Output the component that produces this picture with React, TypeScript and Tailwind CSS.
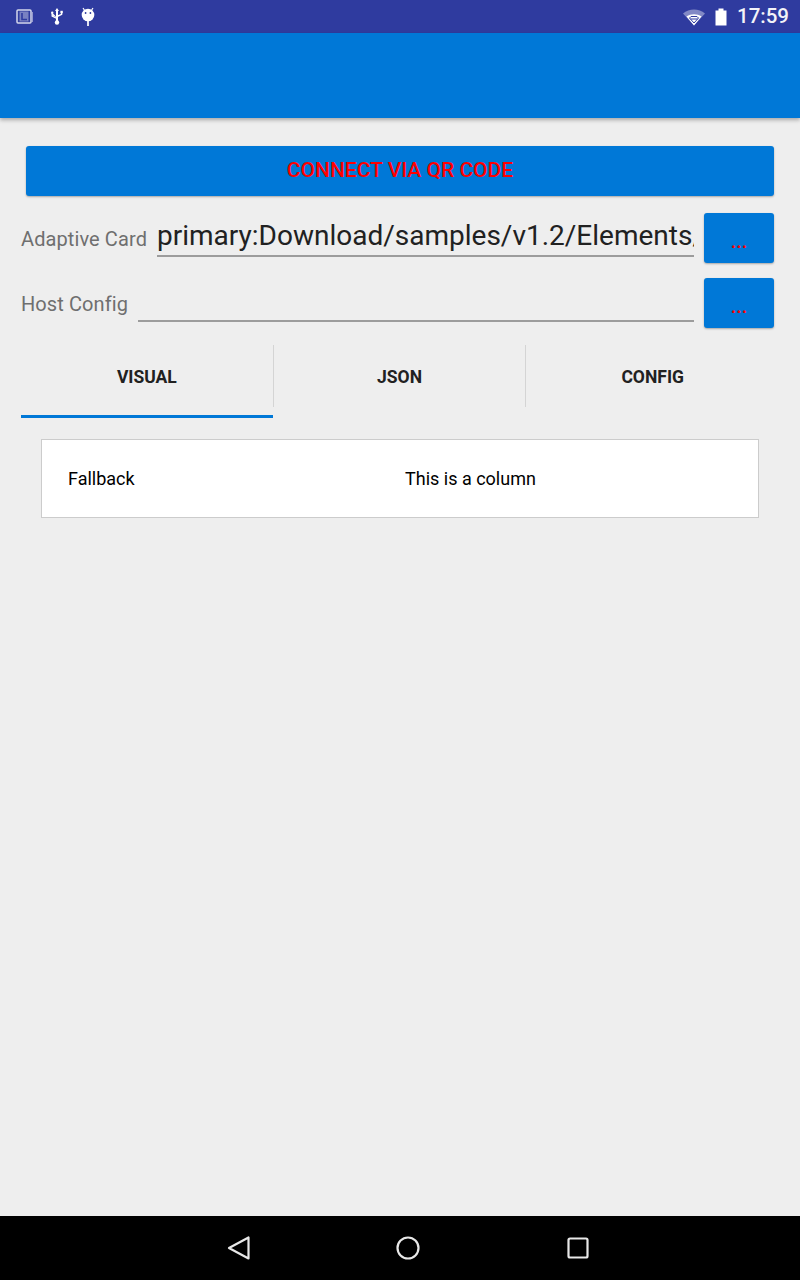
const FONT = "font-['Roboto','Liberation_Sans',sans-serif]"

function StatusBar() {
  return (
    <div className="h-[33px] bg-[#2f3b9f] flex items-center pl-[16px] pr-[11px] text-white">
      <svg width="18" height="18" viewBox="0 0 18 18" className="opacity-80">
        <rect x="1" y="2" width="14" height="13" rx="1" fill="none" stroke="#fff" strokeWidth="1.5" />
        <rect x="3.5" y="3.5" width="9" height="10" fill="#fff" opacity="0.45" />
        <path d="M6 5v6.5h5" fill="none" stroke="#2f3b9f" strokeWidth="1.6" />
        <path d="M16.5 4v10" stroke="#fff" strokeWidth="1" opacity="0.6" />
      </svg>
      <svg width="16" height="20" viewBox="0 0 16 20" className="ml-[15px]">
        <path d="M8 1l2 3H9v9.5a1 1 0 1 1-2 0V4H6z M8 10.5L3.5 8.5V6" fill="#fff" />
        <path d="M8 11.5L3.2 9V6.5M8 9.5l4.6-2.2V5.5" fill="none" stroke="#fff" strokeWidth="1.4" />
        <rect x="2" y="4.5" width="2.4" height="2.4" rx="1.2" fill="#fff" />
        <rect x="11.4" y="3.8" width="2.4" height="2.4" fill="#fff" />
        <circle cx="8" cy="15.5" r="2.2" fill="#fff" />
      </svg>
      <svg width="16" height="20" viewBox="0 0 16 20" className="ml-[15px]">
        <path d="M3 1l2 3M13 1l-2 3" stroke="#fff" strokeWidth="1.2" />
        <circle cx="8" cy="8" r="6.3" fill="#fff" />
        <rect x="7" y="13" width="2" height="6" fill="#fff" opacity="0.85" />
        <circle cx="5.6" cy="6" r="0.9" fill="#2f3b9f" />
        <circle cx="10.4" cy="6" r="0.9" fill="#2f3b9f" />
      </svg>
      <div className="flex-1" />
      <svg width="24" height="18" viewBox="0 0 24 18">
        <path d="M1 5.5C7 0 17 0 23 5.5L12 17.5z" fill="#fff" opacity="0.4" />
        <path d="M4.5 8.5c4.5-3 10.500-3 15 0L12 17.500z" fill="#fff" />
        <path d="M9 8.500h6l1.500 1.500-4.500 5-4.500-5zM8.500 11h7" fill="none" stroke="#2f3b9f" strokeWidth="1" />
      </svg>
      <svg width="14" height="20" viewBox="0 0 14 20" className="ml-[8px]">
        <path d="M4.500 1.500h5v2h3v15h-11v-15h3z" fill="#fff" />
      </svg>
      <span className={`${FONT} ml-[9px] text-[20.5px] leading-none font-medium text-[#f3f3f8]`}>17:59</span>
    </div>
  )
}

function BlueButton({ children, className }: { children: React.ReactNode; className: string }) {
  return (
    <div className={`${className} h-[50px] bg-[#0078d7] rounded-[3px] shadow-[0_1px_2px_rgba(0,0,0,0.3)] flex justify-center text-[#f00] font-medium`}>
      {children}
    </div>
  )
}

function PathRow({ label, value, lineWidth, className }: { label: string; value?: string; lineWidth: string; className: string }) {
  return (
    <div className={`${className} flex h-[50px] pl-[21px] pr-[26px]`}>
      <span className="text-[20px] leading-[26px] text-[#6f6f6f] mt-[13px] tracking-[0.1px] whitespace-nowrap">{label}</span>
      <div className={`${lineWidth} ml-auto h-[44px] border-b-2 border-[#9c9c9c] overflow-hidden`}>
        <span className="block text-[28px] leading-[46px] text-[#212121] whitespace-nowrap">{value}</span>
      </div>
      <BlueButton className="w-[70px] ml-[10px] shrink-0">
        <span className="text-[20px] leading-[50px] mt-[3px]">...</span>
      </BlueButton>
    </div>
  )
}

function Tab({ label, active, divider }: { label: string; active?: boolean; divider?: boolean }) {
  return (
    <div className="relative flex-1">
      <div className={`h-[62px] flex items-center justify-center text-[17.500px] font-bold text-[#212121] ${divider ? 'border-r border-[#d4d4d4]' : ''}`}>
        <span className="mt-[2px]">{label}</span>
      </div>
      {active && <div className="h-[3px] bg-[#0078d7] mt-[8px] mr-px" />}
    </div>
  )
}

export default function App() {
  return (
    <div className={`${FONT} w-[800px] h-[1280px] bg-[#eeeeee] flex flex-col overflow-hidden`}>
      <StatusBar />
      <div className="h-[85px] bg-[#0078d7] shadow-[0_2px_4px_rgba(0,0,0,0.3)]" />

      <main className="flex-1">
        <div className="pt-[28px] px-[26px]">
          <BlueButton className="w-full items-center text-[21px]">CONNECT VIA QR CODE</BlueButton>
        </div>
        <PathRow
          className="mt-[17px]"
          label="Adaptive Card"
          value="primary:Download/samples/v1.2/Elements/Column.Fallback.json"
          lineWidth="w-[537px]"
        />
        <PathRow className="mt-[15px]" label="Host Config" lineWidth="w-[556px]" />

        <div className="flex mt-[17px] mx-[21px] w-[758px]">
          <Tab label="VISUAL" active divider />
          <Tab label="JSON" divider />
          <Tab label="CONFIG" />
        </div>

        <div className="mt-[21px] mx-[41px] h-[79px] bg-white border border-[#cccccc] flex items-center pl-[26px] text-[18px] text-black">
          <span className="w-[337px]">Fallback</span>
          <span>This is a column</span>
        </div>
      </main>

      <div className="h-[64px] bg-black flex items-center pl-[227px]">
        <svg width="24" height="26" viewBox="0 0 24 26">
          <path d="M21.500 2.500v21L2 13z" fill="none" stroke="#e8e8e8" strokeWidth="2.200" strokeLinejoin="round" />
        </svg>
        <svg width="24" height="24" viewBox="0 0 24 24" className="ml-[145px]">
          <circle cx="12" cy="12" r="10.500" fill="none" stroke="#e8e8e8" strokeWidth="2.200" />
        </svg>
        <svg width="22" height="22" viewBox="0 0 22 22" className="ml-[147px]">
          <rect x="1.500" y="1.500" width="19" height="19" rx="1.500" fill="none" stroke="#e8e8e8" strokeWidth="2.200" />
        </svg>
      </div>
    </div>
  )
}
